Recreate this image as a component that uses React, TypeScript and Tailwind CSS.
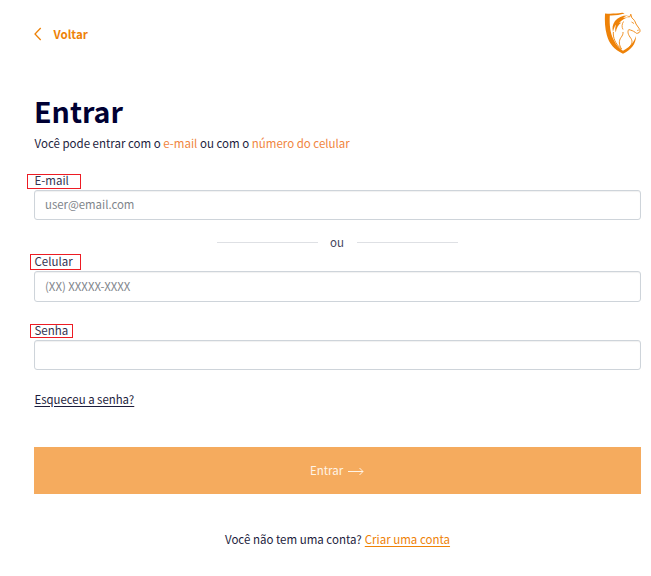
import React from "react";

function Marker({ className }: { className: string }) {
  return <span className={`pointer-events-none absolute border border-[#ed1c24] ${className}`} />;
}

function Field({ label, placeholder, marker, height }: { label: string; placeholder?: string; marker: string; height: string }) {
  return (
    <div className="flex flex-col">
      <label className="relative flex h-[18px] items-center text-[#33334f]">
        <span className="-mt-0.5 pl-[0.5px]">{label}</span>
        <Marker className={marker} />
      </label>
      <input
        type="text"
        placeholder={placeholder}
        className={`w-full rounded-[3px] border border-[#ced4da] bg-white px-2.5 pb-0.5 text-[11.4px] leading-[18px] shadow-[inset_0_1px_1px_rgba(0,0,0,0.06)] outline-none placeholder:text-[#7f858b] ${height}`}
      />
    </div>
  );
}

function HorseShield() {
  return (
    <svg width="38" height="42" viewBox="0 0 38 42" fill="none" className="mt-3">
      <path d="M2 1.5C8 2 13 1.6 19 .8C20 .7 21 1 21.5 1.4C17 2.6 12 3.6 6.8 3.4C6.3 13 7.3 21 10.5 27.5C13 33 16 36.3 20 38.8C27 35 31 30.5 33 24C33 32 28 38 20 41.8C11 37.5 6 31.5 3.8 23C1.9 16 1.6 9 2 1.5Z" fill="#ee8208" />
      <path d="M26 3.6C20 3.2 15 5.2 12 9C9.5 12.5 9 16 10 20C10.5 17 11.5 14.5 13 12.5C12 16 12 18 12.8 20.5C13.3 16 15.5 12.5 18.5 10.5L16.2 11C18.5 8 21.5 6.2 25 5.4L20 5.8C21.5 4.6 23.5 4 26 3.6Z" fill="#ee8208" />
      <path d="M10.4 20C9.8 25 12 32 18.5 37C16 33 15.5 29 18 25.5C19.5 23.5 20.2 22 20 20" stroke="#ee8208" strokeWidth=".9" />
      <path d="M24.5 4.8L26.8 4.8L27.8 2.2L28.8 5.8C31 7.5 32 9 33 12L36.8 17.5C37.4 19.5 36.8 20.7 35 21C34 21.7 33 21.4 32.2 20.3C30 18.8 28.5 18.3 25.8 17.6C24.2 19.5 25 22.5 28 26.5C29.8 29.5 29 32 26.5 35" stroke="#ee8208" strokeWidth=".9" strokeLinejoin="round" />
      <path d="M20.5 9.5C18.7 12.5 18.7 15 20 17.5M28.5 10L31 11.5M34.2 18.5L35.8 18" stroke="#ee8208" strokeWidth=".8" />
    </svg>
  );
}

export default function App() {
  return (
    <main className="flex h-[576px] w-[651px] flex-col bg-white pl-[34px] pr-2.5 font-['Noto_Sans_CJK_SC','Source_Sans_Pro',sans-serif] text-[11.5px] leading-[18px] text-[#1c1c3c]">
      <header className="flex h-[93px] items-start justify-between">
        <a className="mt-[25px] flex items-center text-[11.6px] font-bold text-[#ee8208]">
          <svg width="8" height="14" viewBox="0 0 8 14" fill="none" className="mr-[11.5px]">
            <path d="M6.7 1L1 7L6.7 13" stroke="#ee8208" strokeWidth="1.3" />
          </svg>
          Voltar
        </a>
        <HorseShield />
      </header>
      <h1 className="flex h-9 items-center text-[28.6px] font-bold leading-9 text-[#000033]">Entrar</h1>
      <p className="mt-[5px] h-[18px] whitespace-nowrap pl-[0.5px]">
        Você pode entrar com o <span className="text-[#f08540]">e-mail</span> ou com o <span className="text-[#f08540]">número do celular</span>
      </p>
      <div className="mt-5">
        <Field label="E-mail" placeholder="user@email.com" marker="-left-[7px] top-[2px] h-[15px] w-[54px]" height="h-[30px]" />
      </div>
      <div className="mt-[13px] flex h-[18px] items-center justify-center pr-[1px]">
        <span className="h-px w-[101px] bg-[#dee0e4]" />
        <span className="w-[39px] text-center text-[#44445c]">ou</span>
        <span className="h-px w-[101px] bg-[#dee0e4]" />
      </div>
      <div className="mt-0.5">
        <Field label="Celular" placeholder="(XX) XXXXX-XXXX" marker="-left-1 top-[1px] h-4 w-[51px]" height="h-[31px]" />
      </div>
      <div className="mt-5">
        <Field label="Senha" marker="-left-1 top-[2px] h-[14px] w-[43px]" height="h-[30px]" />
      </div>
      <a className="mt-5 h-[18px] self-start pl-[0.5px] text-[11.4px] underline underline-offset-2">Esqueceu a senha?</a>
      <button className="mt-[39px] flex h-[47px] w-full shrink-0 items-center justify-center bg-[#f5ab5e] pr-px text-[#fff4e6]">
        <span className="-mt-px">Entrar</span>
        <svg width="16" height="9" viewBox="0 0 16 9" fill="none" className="ml-[5px] mt-px">
          <path d="M0 4.5H15M11.5 1L15 4.5L11.5 8" stroke="#fff4e6" />
        </svg>
      </button>
      <p className="mt-9 flex justify-center gap-[3px]">
        <span>Você não tem uma conta?</span>
        <a className="text-[#ee8208] underline underline-offset-2">Criar uma conta</a>
      </p>
    </main>
  );
}
